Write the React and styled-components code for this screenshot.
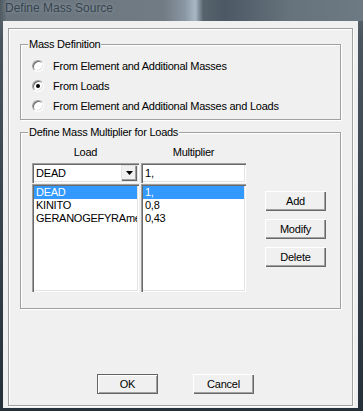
import styled, { createGlobalStyle, css } from 'styled-components';

const GlobalStyle = createGlobalStyle`
  html, body {
    margin: 0;
    padding: 0;
    width: 363px;
    height: 411px;
    overflow: hidden;
  }
  body {
    font-family: 'Liberation Sans', Arial, sans-serif;
    font-weight: 400;
  }
  * {
    box-sizing: border-box;
  }
`;

const loads = ['DEAD', 'KINITO', 'GERANOGEFYRAme'];
const multipliers = ['1,', '0,8', '0,43'];
const massOptions = [
  'From Element and Additional Masses',
  'From Loads',
  'From Element and Additional Masses and Loads'
];

function Arrow() {
  return (
    <svg width='7' height='4' viewBox='0 0 7 4'>
      <path d='M0 0h7L3.5 4z' fill='#000' />
    </svg>
  );
}

export default function App() {
  return (
    <Window>
      <GlobalStyle />
      <TitleBar>
        <Title>Define Mass Source</Title>
      </TitleBar>
      <Client>
        <Panel>
          <Group height={76}>
            <GroupLabel>Mass Definition</GroupLabel>
            <RadioList>
              {massOptions.map((o, i) => (
                <RadioRow key={o}>
                  <Radio checked={i === 1} />
                  <Label>{o}</Label>
                </RadioRow>
              ))}
            </RadioList>
          </Group>

          <Group height={177} gap={12}>
            <GroupLabel>Define Mass Multiplier for Loads</GroupLabel>
            <LoadsBody>
              <LoadsGrid>
                <Header>Load</Header>
                <Header>Multiplier</Header>
                <Combo>
                  <FieldText>DEAD</FieldText>
                  <DropButton>
                    <Arrow />
                  </DropButton>
                </Combo>
                <Combo>
                  <FieldText>1,</FieldText>
                </Combo>
                <List>
                  {loads.map((l, i) => (
                    <Item key={l} selected={i === 0}>
                      {l}
                    </Item>
                  ))}
                </List>
                <List>
                  {multipliers.map((m, i) => (
                    <Item key={m} selected={i === 0}>
                      {m}
                    </Item>
                  ))}
                </List>
              </LoadsGrid>
              <ButtonCol>
                <Button>Add</Button>
                <Button>Modify</Button>
                <Button>Delete</Button>
              </ButtonCol>
            </LoadsBody>
          </Group>

          <Footer>
            <Button isDefault>OK</Button>
            <Button>Cancel</Button>
          </Footer>
        </Panel>
      </Client>
    </Window>
  );
}

const Window = styled.div`
  width: 363px;
  height: 411px;
  display: flex;
  flex-direction: column;
  background: linear-gradient(180deg, #5d6871 0, #4a555f 40px, #26303a 100%);
`;

const TitleBar = styled.div`
  height: 21px;
  flex-shrink: 0;
  padding-left: 5px;
  background: linear-gradient(
    90deg,
    #4e5a60 0,
    #6a757e 2%,
    #717b84 45%,
    #8a97a4 51%,
    #aab8c6 53.8%,
    #56626c 56%,
    #4c5863 62%,
    #66727c 80%,
    #6d7983 100%
  );
`;

const Title = styled.div`
  font-size: 12px;
  line-height: 17px;
  color: #36444e;
  text-shadow: 0 0 4px rgba(190, 200, 210, 0.5);
`;

const Client = styled.div`
  flex: 1;
  margin: 0 5px 3px 3px;
  padding: 7px 5px 2px 5px;
  background: #f0f0f0;
  display: flex;
`;

const etched = css`
  border: 1px solid #a0a0a0;
  box-shadow: inset 1px 1px 0 #fff, 1px 1px 0 #fff;
`;

const Panel = styled.div`
  flex: 1;
  display: flex;
  flex-direction: column;
  padding: 15px 11px 11px 11px;
  ${etched}
`;

const Group = styled.div`
  position: relative;
  height: ${(p) => p.height}px;
  margin-top: ${(p) => p.gap || 0}px;
  flex-shrink: 0;
  ${etched}
`;

const GroupLabel = styled.span`
  position: absolute;
  top: -7px;
  left: 7px;
  padding: 0 1px;
  background: #f0f0f0;
  font-size: 11px;
  line-height: 13px;
  letter-spacing: -0.25px;
  color: #000;
`;

const RadioList = styled.div`
  padding: 11px 0 0 11px;
`;

const RadioRow = styled.div`
  height: 20px;
  display: flex;
  align-items: center;
  gap: 9px;
`;

const Radio = styled.span`
  position: relative;
  width: 12px;
  height: 12px;
  border-radius: 50%;
  background: #fff;
  border: 1px solid;
  border-color: #a0a0a0 #fdfdfd #fdfdfd #a0a0a0;
  box-shadow: inset 1px 1px 0 #696969, inset -1px -1px 0 #e3e3e3;
  flex-shrink: 0;
  &::after {
    content: '';
    display: ${(p) => (p.checked ? 'block' : 'none')};
    position: absolute;
    left: 3px;
    top: 3px;
    width: 4px;
    height: 4px;
    border-radius: 50%;
    background: #000;
  }
`;

const Label = styled.span`
  font-size: 11px;
  letter-spacing: -0.25px;
  color: #000;
`;

const LoadsBody = styled.div`
  display: flex;
  padding: 13px 0 0 11px;
`;

const LoadsGrid = styled.div`
  display: grid;
  grid-template-columns: 107px 105px;
  column-gap: 2px;
  align-content: start;
`;

const Header = styled.div`
  font-size: 11px;
  line-height: 13px;
  letter-spacing: -0.25px;
  text-align: center;
  margin-bottom: 4px;
`;

const sunken = css`
  background: #fff;
  box-shadow: inset 1px 1px 0 #a0a0a0, inset 2px 2px 0 #696969,
    inset -1px -1px 0 #fff, inset -2px -2px 0 #e3e3e3;
`;

const Combo = styled.div`
  height: 20px;
  display: flex;
  align-items: stretch;
  padding: 2px;
  margin-bottom: 1px;
  ${sunken}
`;

const FieldText = styled.div`
  flex: 1;
  padding-left: 2px;
  font-size: 11px;
  line-height: 16px;
  letter-spacing: -0.2px;
`;

const DropButton = styled.div`
  width: 16px;
  display: flex;
  align-items: center;
  justify-content: center;
  background: #f0f0f0;
  box-shadow: inset 1px 1px 0 #e3e3e3, inset -1px -1px 0 #696969,
    inset -2px -2px 0 #a0a0a0;
`;

const List = styled.div`
  height: 108px;
  padding: 2px;
  overflow: hidden;
  ${sunken}
`;

const Item = styled.div`
  height: 13px;
  padding-left: 2px;
  font-size: 11px;
  line-height: 13px;
  letter-spacing: -0.25px;
  white-space: nowrap;
  overflow: hidden;
  color: ${(p) => (p.selected ? '#fff' : '#000')};
  background: ${(p) => (p.selected ? '#3399ff' : 'transparent')};
`;

const ButtonCol = styled.div`
  display: flex;
  flex-direction: column;
  gap: 8px;
  margin-left: 19px;
  padding-top: 45px;
`;

const Button = styled.button`
  width: 61px;
  height: 20px;
  padding: 0;
  font-family: 'Liberation Sans', Arial, sans-serif;
  font-size: 11px;
  font-weight: 400;
  letter-spacing: -0.2px;
  color: #000;
  background: #f0f0f0;
  border: none;
  box-shadow: ${(p) =>
    p.isDefault
      ? 'inset 0 0 0 1px #646464, inset 1px 1px 0 1px #fff, inset -1px -1px 0 1px #a0a0a0'
      : 'inset 1px 1px 0 #fff, inset -1px -1px 0 #696969, inset -2px -2px 0 #a0a0a0'};
`;

const Footer = styled.div`
  margin-top: auto;
  display: flex;
  justify-content: center;
  gap: 35px;
  padding-right: 10px;
`;
